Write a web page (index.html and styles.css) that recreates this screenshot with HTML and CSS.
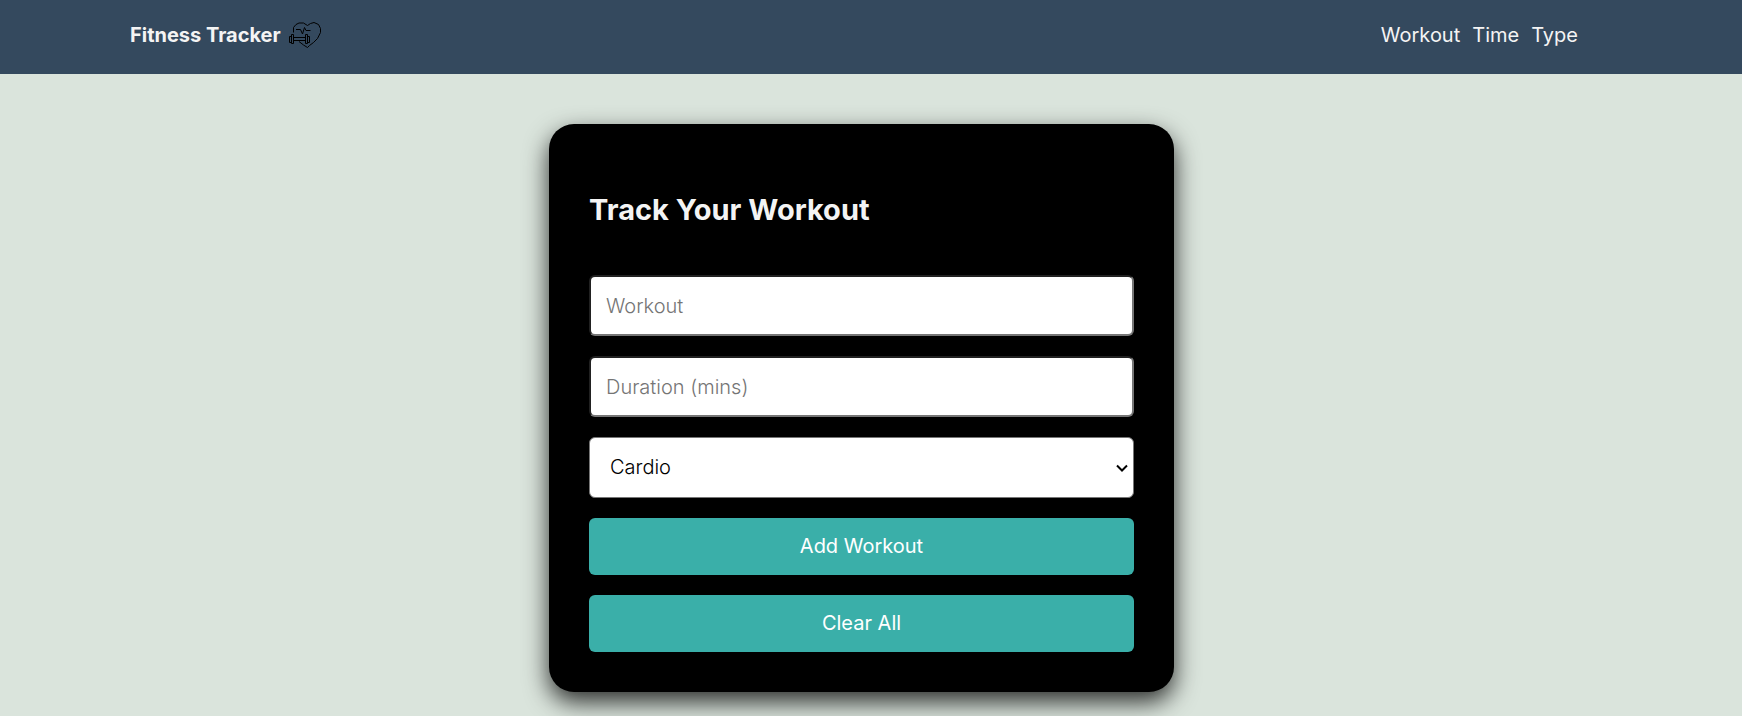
FILE: index.html
```html
<!DOCTYPE html>
<html lang="en">
<head>
<meta charset="utf-8">
<meta name="viewport" content="width=device-width, initial-scale=1">
<title>Fitness Tracker</title>
<link rel="stylesheet" href="styles.css">
</head>
<body>
<header class="header">
  <div class="brand">
    <h1 class="brand-name">Fitness Tracker</h1>
    <svg class="brand-icon" viewBox="0 0 34 28" aria-hidden="true">
      <path d="M5.500 11.500V6.500L8 3.500l3-1.500h4.500l4 2.500 3-2L26 1.500l4.500 2 2 4v4l-3 6-4 4-4 3-2 2-4-2.500-4.500-3.500"/>
      <path d="M8 8.500h4.500l2 4.500 2-6.500 1.500 3h4.500"/>
      <path d="M3.500 13.500h2v9h-2zM1.500 15.500h2v6h-2zM17.500 13.500h2v9h-2zM19.500 15.500h2v6h-2zM5.500 16.500h12M5.500 19.500h12"/>
    </svg>
  </div>
  <nav class="nav">
    <a class="nav-link" href="#workout">Workout</a>
    <a class="nav-link" href="#duration">Time</a>
    <a class="nav-link" href="#type">Type</a>
  </nav>
</header>
<main class="main">
  <form class="card">
    <h2 class="card-title">Track Your Workout</h2>
    <input class="field" id="workout" type="text" placeholder="Workout" aria-label="Workout">
    <input class="field" id="duration" type="number" placeholder="Duration (mins)" aria-label="Duration (mins)">
    <div class="select-wrap">
      <select class="select" id="type" aria-label="Type">
        <option>Cardio</option>
        <option>Strength</option>
        <option>Flexibility</option>
      </select>
      <svg class="select-arrow" viewBox="0 0 12 8" aria-hidden="true"><path d="M1 1.500l5 5 5-5"/></svg>
    </div>
    <button class="button" type="button">Add Workout</button>
    <button class="button" type="reset">Clear All</button>
  </form>
</main>
</body>
</html>
```
FILE: styles.css
```css
* {
  box-sizing: border-box;
}

body {
  margin: 0;
  background: #dae4dc;
  color: #f4f4f4;
  font-family: Inter, "Liberation Sans", sans-serif;
  font-size: 20px;
  line-height: 27px;
}

.header {
  display: flex;
  align-items: center;
  justify-content: space-between;
  padding: 21px 164px 25px 130px;
  background: #34495e;
}

.brand {
  display: flex;
  align-items: center;
  gap: 7px;
}

.brand-name {
  margin: 0;
  font-size: 20px;
  font-weight: 700;
}

.brand-icon {
  width: 34px;
  height: 28px;
  fill: none;
  stroke: #000;
  stroke-width: 1;
}

.nav {
  display: flex;
  gap: 12px;
}

.nav-link {
  color: inherit;
  text-decoration: none;
}

.main {
  display: flex;
  justify-content: center;
  padding: 50px 19px 24px 0;
}

.card {
  display: flex;
  flex-direction: column;
  gap: 20px;
  width: 100%;
  max-width: 625px;
  padding: 40px;
  border-radius: 25px;
  background: #000;
  box-shadow: 0 10px 24px rgba(0, 0, 0, 0.8);
}

.card-title {
  margin: 25px 0;
  font-size: 29px;
  font-weight: 700;
  line-height: 41px;
}

.field,
.select,
.button {
  width: 100%;
  border-radius: 6px;
  font: inherit;
}

.field {
  height: 61px;
  padding: 15px;
  border: 2px inset #767676;
  background: #fff;
  color: #000;
  font-weight: 300;
  appearance: textfield;
}

.field::placeholder {
  color: #757575;
}

.select-wrap {
  display: grid;
  position: relative;
}

.select {
  height: 61px;
  padding: 15px 32px 15px 20px;
  border: 1px solid #767676;
  background: #fff;
  color: #000;
  font-weight: 300;
  appearance: none;
}

.select-arrow {
  position: absolute;
  top: 27px;
  right: 6px;
  width: 12px;
  height: 8px;
  fill: none;
  stroke: #000;
  stroke-width: 2;
  pointer-events: none;
}

.button {
  padding: 15px;
  border: 0;
  background: #3aafa9;
  color: #fff;
  cursor: pointer;
}
```
